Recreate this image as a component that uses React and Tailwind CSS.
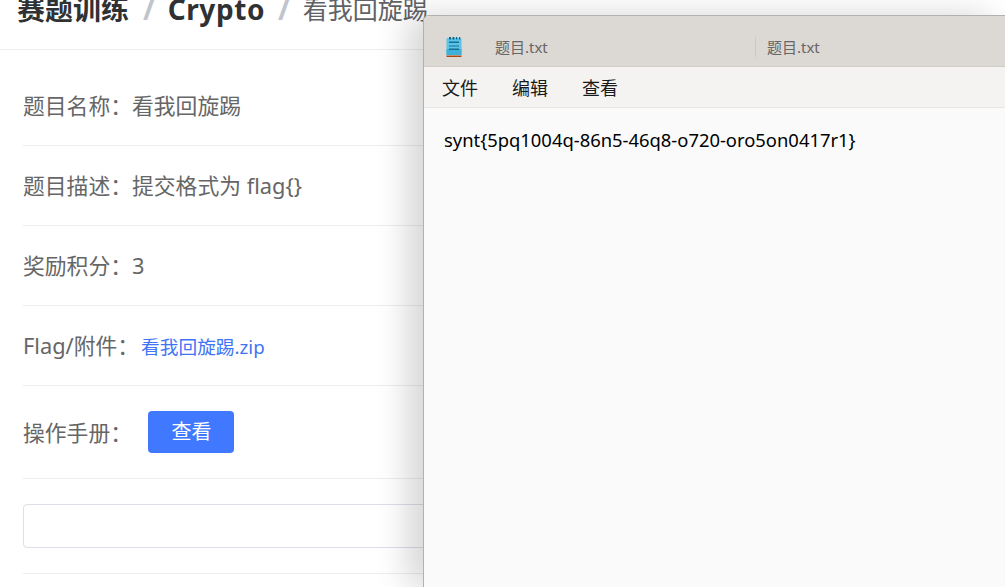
const page = { fontFamily: '"Noto Sans", "Noto Sans CJK SC", sans-serif' };

function Row({ children, className = "" }) {
  return (
    <div className={`flex items-center border-b border-[#ebedf0] text-[21.8px] text-[#666666] ${className}`}>
      {children}
    </div>
  );
}

function NotepadIcon() {
  return (
    <svg width="17" height="21" viewBox="0 0 17 21">
      <rect x="0.5" y="1" width="15" height="17" rx="1" fill="#5cc4ea" />
      <rect x="0.5" y="12" width="15" height="6" fill="#3fb0da" />
      <rect x="3" y="0" width="2" height="2.5" fill="#13688a" />
      <rect x="6.5" y="0" width="2" height="2.5" fill="#13688a" />
      <rect x="10" y="0" width="1.2" height="2.5" fill="#13688a" />
      <rect x="13" y="0" width="1.2" height="2.5" fill="#13688a" />
      <rect x="3" y="4.5" width="10" height="1.5" fill="#14708f" />
      <rect x="3" y="8.5" width="10" height="1" fill="#14708f" />
      <rect x="3" y="11.5" width="10" height="1.5" fill="#14708f" />
      <rect x="0.5" y="18.5" width="15" height="1.5" fill="#a84a10" />
    </svg>
  );
}

export default function App() {
  return (
    <div className="relative h-[587px] w-[1005px] overflow-hidden bg-white" style={page}>
      <div className="flex h-[50px] items-center border-b border-[#ebedf0] pb-[31px] pl-[17px] text-[28px] leading-[28px] whitespace-nowrap">
        <span className="font-bold text-[#303133]">赛题训练</span>
        <span className="mr-[13px] ml-[14px] font-bold text-[#c0c4cc]">/</span>
        <span className="font-bold tracking-[0.6px] text-[#303133]">Crypto</span>
        <span className="mx-[13px] font-bold text-[#c0c4cc]">/</span>
        <span className="text-[25px] text-[#606266]">看我回旋踢</span>
      </div>

      <div className="px-[23px]">
        <Row className="h-[96px] pt-[18px]">{"题目名称\uFF1A看我回旋踢"}</Row>
        <Row className="h-[80px] pt-[2px]">{"题目描述\uFF1A提交格式为 flag{}"}</Row>
        <Row className="h-[80px] pt-[2px]">{"奖励积分\uFF1A3"}</Row>
        <Row className="h-[80px] pt-[2px]">
          {"Flag/附件\uFF1A"}
          <span className="mt-[2px] ml-[2px] text-[18.7px] text-[#4174f5]">看我回旋踢.zip</span>
        </Row>
        <Row className="h-[93px] pt-[2px]">
          {"操作手册\uFF1A"}
          <button className="-mt-[2px] ml-[16px] flex h-[42px] w-[86px] items-center justify-center rounded-[4px] bg-[#4078ff] pl-px text-[20px] text-white">
            查看
          </button>
        </Row>
        <div className="flex h-[95px] items-center border-b border-[#ebedf0]">
          <div className="h-[44px] w-full rounded-[4px] border border-[#dcdfe6]" />
        </div>
      </div>

      <div className="absolute top-[15px] left-[423px] flex h-[572px] w-[582px] flex-col rounded-tl-[6px] border-t border-l border-[#b3b1af] bg-[#fafafa] shadow-[-16px_0_32px_rgba(0,0,0,0.16)]">
        <div className="flex h-[51px] shrink-0 items-center rounded-tl-[6px] border-b border-[#d0ccc8] bg-[#dcd8d3] pt-[12px] pl-[22px] text-[15px] text-[#666666]">
          <NotepadIcon />
          <span className="ml-[32px] w-[260px]">题目.txt</span>
          <span className="h-[20px] border-l border-[#cdc8c3]" />
          <span className="ml-[11px]">题目.txt</span>
        </div>
        <div className="flex h-[41px] shrink-0 items-center gap-[34px] border-b border-[#e8e6e4] bg-[#f5f3f1] pt-[2px] pl-[18px] text-[18px] text-[#1a1a1a]">
          <span>文件</span>
          <span>编辑</span>
          <span>查看</span>
        </div>
        <div className="px-[20px] pt-[19px] text-[18.4px] leading-[26px] text-black">
          {"synt{5pq1004q-86n5-46q8-o720-oro5on0417r1}"}
        </div>
      </div>
    </div>
  );
}
